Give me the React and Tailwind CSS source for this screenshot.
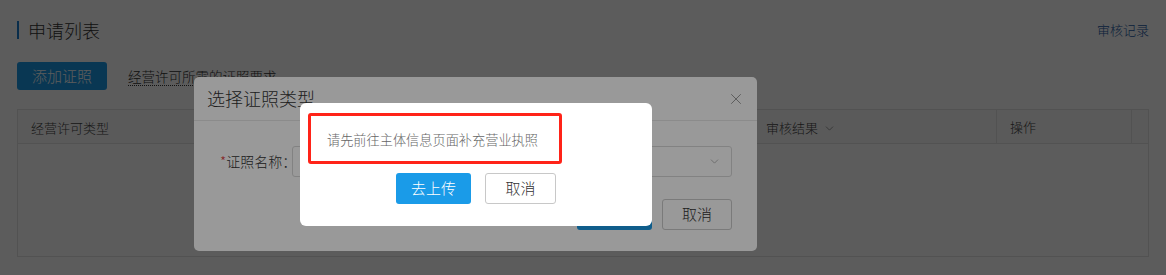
import { ChevronDown, X } from 'lucide-react'

const font = { fontFamily: '"Noto Sans CJK SC", "Liberation Sans", sans-serif' }

function PageBehind() {
  return (
    <div className="flex flex-col px-[17px] pt-[20px]">
      <div className="flex items-center justify-between h-[20px]">
        <div className="flex items-center gap-[9px]">
          <span className="w-[2px] h-[18px] bg-[#1a7fd0]" />
          <span className="text-[18px] leading-[20px] text-[#333]">申请列表</span>
        </div>
        <a className="text-[13px] text-[#1d5aa6] cursor-pointer">审核记录</a>
      </div>

      <div className="flex items-center gap-[21px] mt-[22px] h-[28px]">
        <button className="h-[28px] w-[90px] rounded-[3px] bg-[#1a9be8] text-white text-[15px]">添加证照</button>
        <span className="text-[13.5px] text-[#333] border-b border-dotted border-[#333] leading-[18px]">经营许可所需的证照要求</span>
      </div>

      <div className="mt-[19px] border border-[#e5e5e5] h-[148px] flex flex-col">
        <div className="flex h-[34px] pt-[3px] border-b border-[#e5e5e5] bg-[#fcfcfc] text-[13px] text-[#444]">
          <div className="w-[735px] flex items-center pl-[13px]">经营许可类型</div>
          <div className="w-[243px] flex items-center pl-[13px] gap-[5px]">
            审核结果
            <ChevronDown className="w-[13px] h-[13px] text-[#888]" strokeWidth={1.5} />
          </div>
          <div className="flex-1 flex items-center pl-[13px] border-l border-[#e5e5e5] -mt-[3px]">操作</div>
          <div className="w-[17px] border-l border-[#e5e5e5] -mt-[3px]" />
        </div>
        <div className="flex-1" />
      </div>
    </div>
  )
}

function SelectTypeDialog() {
  return (
    <div className="absolute left-[194px] top-[77px] w-[563px] h-[174px] bg-white rounded-[5px] flex flex-col">
      <div className="h-[44px] border-b border-[#e8e8e8] flex items-center justify-between pl-[13px] pr-[12px]">
        <span className="text-[18px] text-[#333]">选择证照类型</span>
        <X className="w-[18px] h-[18px] text-[#999]" strokeWidth={1.3} />
      </div>
      <div className="flex items-center mt-[25px] pl-[26px] pr-[25px]">
        <span className="text-[14px] text-[#333] w-[72px] whitespace-nowrap">
          <span className="text-[#e03a3a]">*</span>证照名称：
        </span>
        <div className="flex-1 h-[31px] border border-[#d9d9d9] rounded-[3px] flex items-center justify-end pr-[10px]">
          <ChevronDown className="w-[13px] h-[13px] text-[#aaa]" strokeWidth={1.5} />
        </div>
      </div>
      <div className="flex justify-end gap-[10px] mt-[22px] pr-[25px]">
        <button className="w-[75px] h-[31px] rounded-[3px] bg-[#1a9be8] text-white text-[15px]">确定</button>
        <button className="w-[70px] h-[31px] rounded-[3px] border border-[#ccc] bg-white text-[15px] text-[#333]">取消</button>
      </div>
    </div>
  )
}

function ConfirmDialog() {
  return (
    <div className="absolute left-[300px] top-[103px] w-[352px] h-[123px] bg-white rounded-[6px] flex flex-col items-center">
      <div className="self-stretch pl-[27px] pt-[28px] h-[70px] text-[13.2px] leading-[18px] text-[#666]">
        请先前往主体信息页面补充营业执照
      </div>
      <div className="flex gap-[14px]">
        <button className="w-[75px] h-[31px] rounded-[3px] bg-[#1a9be8] text-white text-[15px]">去上传</button>
        <button className="w-[71px] h-[31px] rounded-[3px] border border-[#c8c8c8] bg-white text-[15px] text-[#333]">取消</button>
      </div>
      {/* red annotation box from the screenshot */}
      <div className="absolute left-[8px] top-[10px] w-[254px] h-[51px] border-[3px] border-[#ff2318] rounded-[3px]" />
    </div>
  )
}

export default function App() {
  return (
    <div className="relative w-[1166px] h-[275px] bg-white overflow-hidden font-light" style={font}>
      <PageBehind />
      <div className="absolute inset-0 bg-black/40" />
      <SelectTypeDialog />
      <div className="absolute inset-0 bg-black/40" />
      <ConfirmDialog />
    </div>
  )
}
